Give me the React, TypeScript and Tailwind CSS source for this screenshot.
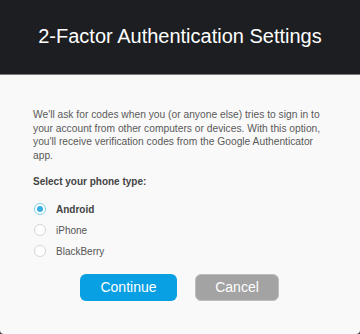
import React, { useState } from "react";

const phones = ["Android", "iPhone", "BlackBerry"];

const App: React.FC = () => {
  const [phone, setPhone] = useState<string>("Android");

  return (
    <div className="w-[360px] h-[334px] bg-[#3a3a3a] font-['Liberation_Sans',Arial,sans-serif]">
      <div className="h-[334px] rounded-b-[4px] bg-[#f9f9f9] overflow-hidden flex flex-col">
        <div className="h-[75px] bg-[#1d1e21] border-b border-[#7a7a7a] flex items-center justify-center">
          <h1 className="text-white text-[20px] leading-none pb-[2px]">
            2-Factor Authentication Settings
          </h1>
        </div>
        <div className="pt-[33px] px-[33px]">
          <p className="text-[10.25px] leading-[13.7px] text-[#5a5a5a] w-[294px]">
            We'll ask for codes when you (or anyone else) tries to sign in to
            your account from other computers or devices. With this option,
            you'll receive verification codes from the Google Authenticator
            app.
          </p>
          <p className="mt-[12px] text-[10px] font-bold text-[#444] leading-[13px]">
            Select your phone type:
          </p>
          <div className="mt-[11px] flex flex-col">
            {phones.map((p) => (
              <label
                key={p}
                onClick={() => setPhone(p)}
                className="h-[21px] flex items-center gap-[10px] pl-[1px] cursor-pointer"
              >
                <span
                  className={
                    phone === p
                      ? "w-[12px] h-[12px] rounded-full border border-[#7fcdef] bg-white flex items-center justify-center"
                      : "w-[12px] h-[12px] rounded-full border border-[#d6d6d6] bg-white"
                  }
                >
                  {phone === p && (
                    <span className="w-[6px] h-[6px] rounded-full bg-[#3aaee3]" />
                  )}
                </span>
                <span
                  className={
                    phone === p
                      ? "text-[10px] font-bold text-[#444]"
                      : "text-[10px] text-[#555]"
                  }
                >
                  {p}
                </span>
              </label>
            ))}
          </div>
          <div className="mt-[12px] flex justify-center gap-[18px] pr-[1px]">
            <button className="w-[97px] h-[27px] rounded-[6px] bg-[#089fe3] text-white text-[14px]">
              Continue
            </button>
            <button className="w-[84px] h-[27px] rounded-[6px] bg-[#a3a3a3] border border-[#bdbdbd] text-white text-[14px]">
              Cancel
            </button>
          </div>
        </div>
      </div>
    </div>
  );
};

export default App;
